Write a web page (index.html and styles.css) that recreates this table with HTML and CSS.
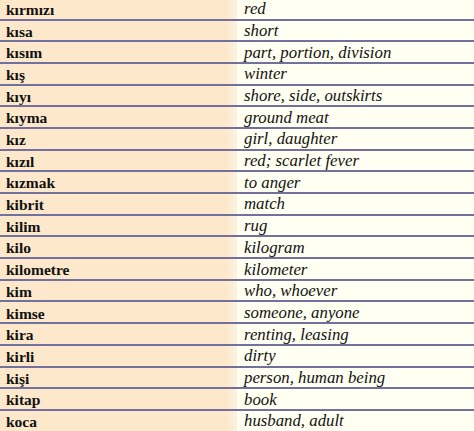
FILE: index.html
```html
<!DOCTYPE html>
<html>
<head>
<meta charset="utf-8">
<link rel="stylesheet" href="styles.css">
</head>
<body>
<div class="table">
  <div class="row"><div class="tr">kırmızı</div><div class="en">red</div></div>
  <div class="row"><div class="tr">kısa</div><div class="en">short</div></div>
  <div class="row"><div class="tr">kısım</div><div class="en">part, portion, division</div></div>
  <div class="row"><div class="tr">kış</div><div class="en">winter</div></div>
  <div class="row"><div class="tr">kıyı</div><div class="en">shore, side, outskirts</div></div>
  <div class="row"><div class="tr">kıyma</div><div class="en">ground meat</div></div>
  <div class="row"><div class="tr">kız</div><div class="en">girl, daughter</div></div>
  <div class="row"><div class="tr">kızıl</div><div class="en">red; scarlet fever</div></div>
  <div class="row"><div class="tr">kızmak</div><div class="en">to anger</div></div>
  <div class="row"><div class="tr">kibrit</div><div class="en">match</div></div>
  <div class="row"><div class="tr">kilim</div><div class="en">rug</div></div>
  <div class="row"><div class="tr">kilo</div><div class="en">kilogram</div></div>
  <div class="row"><div class="tr">kilometre</div><div class="en">kilometer</div></div>
  <div class="row"><div class="tr">kim</div><div class="en">who, whoever</div></div>
  <div class="row"><div class="tr">kimse</div><div class="en">someone, anyone</div></div>
  <div class="row"><div class="tr">kira</div><div class="en">renting, leasing</div></div>
  <div class="row"><div class="tr">kirli</div><div class="en">dirty</div></div>
  <div class="row"><div class="tr">kişi</div><div class="en">person, human being</div></div>
  <div class="row"><div class="tr">kitap</div><div class="en">book</div></div>
  <div class="row last"><div class="tr">koca</div><div class="en">husband, adult</div></div>
</div>
</body>
</html>
```
FILE: styles.css
```css
html, body {
  margin: 0;
  padding: 0;
  background: #fffff2;
  overflow: hidden;
}
.table {
  width: 474px;
  margin-top: -1.2px;
  display: flex;
  flex-direction: column;
  font-family: "Liberation Serif", "Times New Roman", serif;
  color: #111;
}
.row {
  display: grid;
  grid-template-columns: 237px 1fr;
  grid-template-rows: 19.7px;
  height: 21.7px;
  box-sizing: border-box;
  border-bottom: 2px solid #72709c;
}
.row.last {
  border-bottom: none;
}
.tr {
  background: linear-gradient(to right, #fde8cb 0, #fde8cb 226px, #fdf2de 237px);
  font-size: 15.5px;
  line-height: 1;
  font-weight: bold;
  padding-left: 6px;
  display: flex;
  align-items: center;
  padding-top: 2px;
  overflow: hidden;
}
.en {
  background: #fffff2;
  font-size: 16.8px;
  line-height: 1;
  font-style: italic;
  padding-left: 7px;
  display: flex;
  align-items: center;
  padding-top: 2px;
  overflow: hidden;
}
```
